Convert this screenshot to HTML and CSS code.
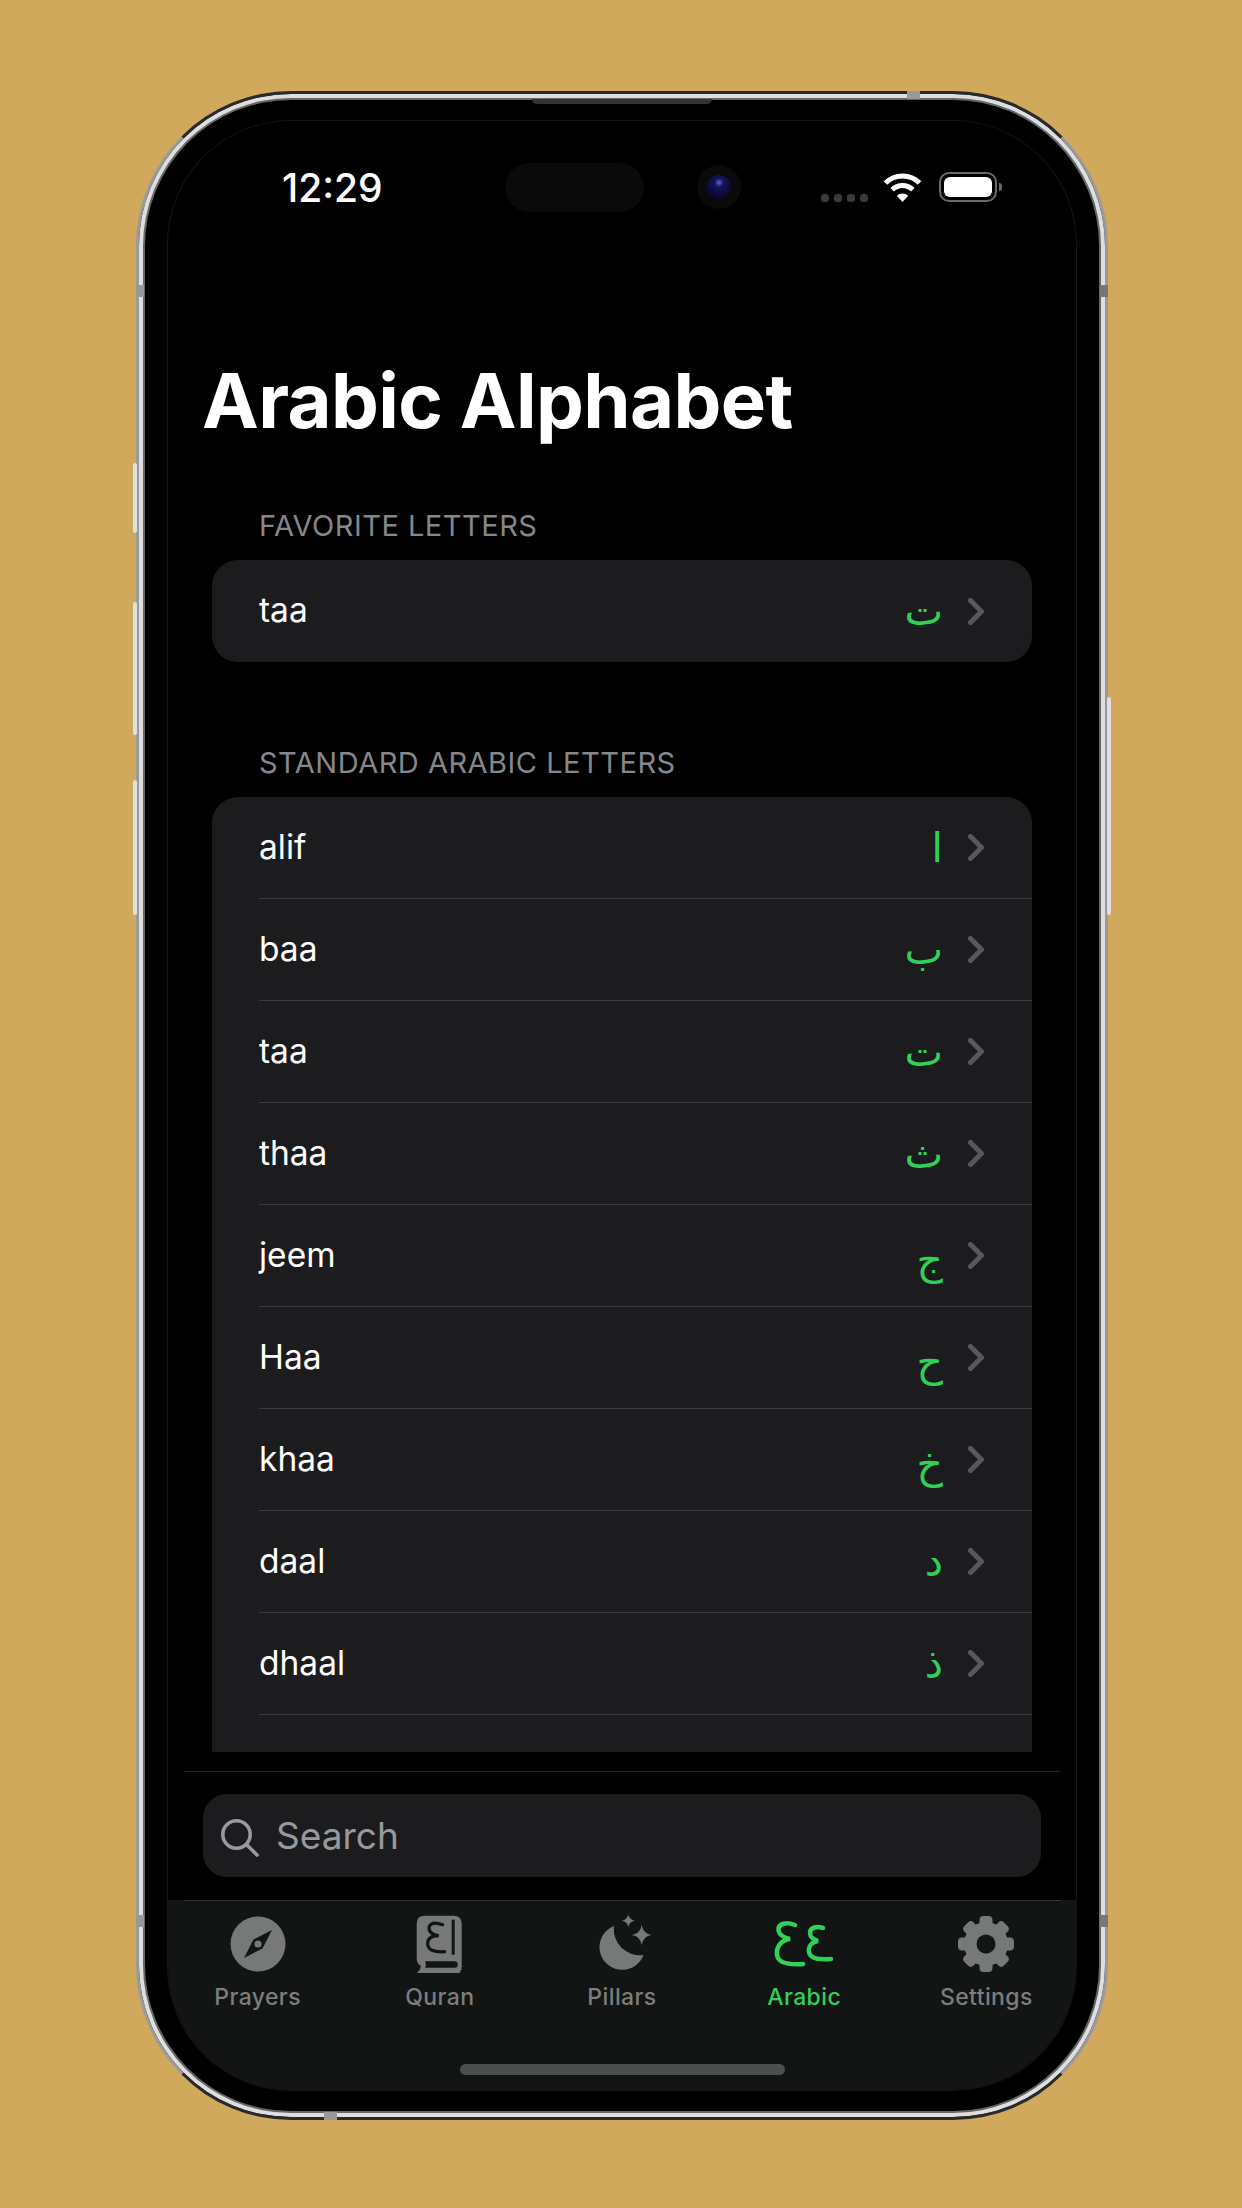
FILE: index.html
```html
<!DOCTYPE html>
<html lang="en">
<head>
    <meta charset="UTF-8">
    <meta name="viewport" content="width=device-width, initial-scale=1.0">
    <title>Arabic Alphabet</title>
    <link rel="stylesheet" href="styles.css">
</head>
<body>

<div class="phone">
    <!-- Frame details -->
    <span class="side-btn btn-a"></span>
    <span class="side-btn btn-b"></span>
    <span class="side-btn btn-c"></span>
    <span class="side-btn btn-d"></span>
    <span class="tick tick-top"></span>
    <span class="tick tick-bottom"></span>
    <span class="tick tick-lt"></span>
    <span class="tick tick-rt"></span>
    <span class="tick tick-lb"></span>
    <span class="tick tick-rb"></span>
    <span class="speaker"></span>

    <div class="screen">
        <div class="status-bar">
            <span class="time">12:29</span>
            <span class="island"></span>
            <span class="camera"><span class="lens"></span></span>
            <span class="signal"><i></i><i></i><i></i><i></i></span>
            <svg class="wifi" width="39" height="29" viewBox="0 0 39 29">
                <path d="M2.5 10A24 24 0 0 1 36.5 10" fill="none" stroke="#fff" stroke-width="5"/>
                <path d="M9.25 16.75A14.5 14.5 0 0 1 29.75 16.75" fill="none" stroke="#fff" stroke-width="5"/>
                <path d="M19.5 29L13.8 22.8A8 8 0 0 1 25.2 22.8Z" fill="#fff"/>
            </svg>
            <span class="battery"><span class="battery-fill"></span></span>
            <span class="battery-nub"></span>
        </div>

        <div class="content">
            <h1 class="page-title">Arabic Alphabet</h1>

            <h2 class="section-title first">FAVORITE LETTERS</h2>
            <div class="card">
                <div class="row">
                    <div class="row-inner">
                        <span class="name">taa</span>
                        <span class="letter">ت</span>
                        <svg class="chevron" width="16" height="27" viewBox="0 0 16 27"><path d="M2.5 2.5L13.5 13.5L2.5 24.5"/></svg>
                    </div>
                </div>
            </div>

            <h2 class="section-title">STANDARD ARABIC LETTERS</h2>
            <div class="card">
                <div class="row"><div class="row-inner">
                    <span class="name">alif</span><span class="letter">ا</span>
                    <svg class="chevron" width="16" height="27" viewBox="0 0 16 27"><path d="M2.5 2.5L13.5 13.5L2.5 24.5"/></svg>
                </div></div>
                <div class="row"><div class="row-inner">
                    <span class="name">baa</span><span class="letter">ب</span>
                    <svg class="chevron" width="16" height="27" viewBox="0 0 16 27"><path d="M2.5 2.5L13.5 13.5L2.5 24.5"/></svg>
                </div></div>
                <div class="row"><div class="row-inner">
                    <span class="name">taa</span><span class="letter">ت</span>
                    <svg class="chevron" width="16" height="27" viewBox="0 0 16 27"><path d="M2.5 2.5L13.5 13.5L2.5 24.5"/></svg>
                </div></div>
                <div class="row"><div class="row-inner">
                    <span class="name">thaa</span><span class="letter">ث</span>
                    <svg class="chevron" width="16" height="27" viewBox="0 0 16 27"><path d="M2.5 2.5L13.5 13.5L2.5 24.5"/></svg>
                </div></div>
                <div class="row"><div class="row-inner">
                    <span class="name">jeem</span><span class="letter low">ج</span>
                    <svg class="chevron" width="16" height="27" viewBox="0 0 16 27"><path d="M2.5 2.5L13.5 13.5L2.5 24.5"/></svg>
                </div></div>
                <div class="row"><div class="row-inner">
                    <span class="name">Haa</span><span class="letter low">ح</span>
                    <svg class="chevron" width="16" height="27" viewBox="0 0 16 27"><path d="M2.5 2.5L13.5 13.5L2.5 24.5"/></svg>
                </div></div>
                <div class="row"><div class="row-inner">
                    <span class="name">khaa</span><span class="letter low">خ</span>
                    <svg class="chevron" width="16" height="27" viewBox="0 0 16 27"><path d="M2.5 2.5L13.5 13.5L2.5 24.5"/></svg>
                </div></div>
                <div class="row"><div class="row-inner">
                    <span class="name">daal</span><span class="letter">د</span>
                    <svg class="chevron" width="16" height="27" viewBox="0 0 16 27"><path d="M2.5 2.5L13.5 13.5L2.5 24.5"/></svg>
                </div></div>
                <div class="row"><div class="row-inner">
                    <span class="name">dhaal</span><span class="letter">ذ</span>
                    <svg class="chevron" width="16" height="27" viewBox="0 0 16 27"><path d="M2.5 2.5L13.5 13.5L2.5 24.5"/></svg>
                </div></div>
                <div class="row"><div class="row-inner">
                    <span class="name"></span>
                    <svg class="chevron" width="16" height="27" viewBox="0 0 16 27"><path d="M2.5 2.5L13.5 13.5L2.5 24.5"/></svg>
                </div></div>
            </div>
        </div>

        <div class="search-area">
            <div class="search-box">
                <svg class="search-icon" width="38" height="38" viewBox="0 0 38 38">
                    <circle cx="15.5" cy="15.5" r="13.7"/>
                    <path d="M25.5 25.5L36 36"/>
                </svg>
                <span class="search-text">Search</span>
            </div>
        </div>

        <div class="tab-bar">
            <div class="tab-line"></div>
            <div class="tabs">
                <div class="tab">
                    <svg width="80" height="58" viewBox="-40 -29 80 58">
                        <circle r="27.5" fill="#767978"/>
                        <path d="M14 -14L4.5 4.5L-14 14L-4.5 -4.5Z" fill="#131414"/>
                        <circle r="3.6" fill="#767978"/>
                    </svg>
                    <span>Prayers</span>
                </div>
                <div class="tab">
                    <svg width="80" height="58" viewBox="0 10 80 58">
                        <g transform="translate(16.7 10.7)">
                            <path d="M8 0H37Q45 0 45 8V51Q45 59 37 59H2Q0 59 1 56Q4 54 4 50Q0 48 0 42V8Q0 0 8 0Z" fill="#767978"/>
                            <path d="M8.5 45.5H38Q41 45.5 41 48.7Q41 52 38 52H8.5Q9.8 49 8.5 45.5Z" fill="#131414"/>
                            <rect x="35" y="4" width="3" height="35" fill="#131414"/>
                            <path d="M26 9Q15 5 12.5 11Q11 18 22 20Q11 20 11 28Q11 37 28 36" fill="none" stroke="#131414" stroke-width="3.2" stroke-linecap="round"/>
                        </g>
                    </svg>
                    <span>Quran</span>
                </div>
                <div class="tab">
                    <svg width="80" height="58" viewBox="-3 10 80 58" fill="#767978">
                        <path d="M29 21A22.7 22.7 0 1 0 58.5 50A26 26 0 0 1 29 21Z"/>
                        <path d="M56.7 20Q58 28.7 66.7 30Q58 31.3 56.7 40Q55.4 31.3 46.7 30Q55.4 28.7 56.7 20Z"/>
                        <path d="M43.3 9.2Q44.2 14.8 49.8 15.7Q44.2 16.6 43.3 22.2Q42.4 16.6 36.8 15.7Q42.4 14.8 43.3 9.2Z"/>
                    </svg>
                    <span>Pillars</span>
                </div>
                <div class="tab active">
                    <svg width="80" height="58" viewBox="3 10 80 58" fill="none" stroke="#30d158" stroke-width="4.5" stroke-linecap="round">
                        <path d="M34 20C26 17 17 18 17.5 25C18 30 24 33 29 34C20 35 15 42 16 50C17 58 27 60 42 59"/>
                        <path d="M62 23C56 21 49 22 49 28C49 32 53 35 57 36C51 37 47 41 48 47C49 54 58 55 70 54"/>
                    </svg>
                    <span>Arabic</span>
                </div>
                <div class="tab">
                    <svg width="80" height="58" viewBox="-40 -29 80 58" fill="#767978">
                        <circle r="22"/>
                        <rect x="-6.5" y="-28" width="13" height="14" rx="4"/>
                        <rect x="-6.5" y="-28" width="13" height="14" rx="4" transform="rotate(45)"/>
                        <rect x="-6.5" y="-28" width="13" height="14" rx="4" transform="rotate(90)"/>
                        <rect x="-6.5" y="-28" width="13" height="14" rx="4" transform="rotate(135)"/>
                        <rect x="-6.5" y="-28" width="13" height="14" rx="4" transform="rotate(180)"/>
                        <rect x="-6.5" y="-28" width="13" height="14" rx="4" transform="rotate(225)"/>
                        <rect x="-6.5" y="-28" width="13" height="14" rx="4" transform="rotate(270)"/>
                        <rect x="-6.5" y="-28" width="13" height="14" rx="4" transform="rotate(315)"/>
                        <circle r="9.5" fill="#131414"/>
                    </svg>
                    <span>Settings</span>
                </div>
            </div>
            <div class="home-indicator"></div>
        </div>
    </div>
</div>

</body>
</html>
```

FILE: styles.css
```css
* {
    box-sizing: border-box;
}
body {
    margin: 0;
    padding: 91px 0 0 136px;
    height: 2208px;
    overflow: hidden;
    background: #d0a95c;
    font-family: Inter, "Noto Sans", sans-serif;
    color: white;
}

/* Phone frame */
.phone {
    position: relative;
    width: 972px;
    height: 2029px;
    padding: 27px 29px;
    background: #000;
    border: 3px solid #9a9a9a;
    border-top-color: #2a2a2a;
    border-bottom-color: #2a2a2a;
    border-radius: 155px;
    box-shadow: inset 0 0 0 4px #dedede, inset 0 0 0 6px #666;
}
.side-btn {
    position: absolute;
    width: 4px;
    background: #e0e0e0;
    border-radius: 2px;
}
.btn-a { left: -6px; top: 369px; height: 70px; }
.btn-b { left: -6px; top: 508px; height: 133px; }
.btn-c { left: -6px; top: 686px; height: 135px; }
.btn-d { right: -6px; top: 603px; height: 218px; }
.tick {
    position: absolute;
    background: #999;
}
.tick-top { top: -3px; left: 768px; width: 13px; height: 8px; }
.tick-bottom { bottom: -3px; left: 185px; width: 13px; height: 8px; }
.tick-lt { left: -3px; top: 191px; width: 8px; height: 12px; }
.tick-rt { right: -3px; top: 191px; width: 8px; height: 12px; background: #777; }
.tick-lb { left: -3px; top: 1821px; width: 8px; height: 12px; }
.tick-rb { right: -3px; top: 1821px; width: 8px; height: 12px; background: #777; }
.speaker {
    position: absolute;
    top: 5px;
    left: 393px;
    width: 180px;
    height: 5px;
    background: #333;
    border-radius: 0 0 6px 6px;
}

.screen {
    width: 908px;
    height: 1969px;
    display: flex;
    flex-direction: column;
    background: #000;
    border-radius: 123px;
    box-shadow: 0 0 0 1px #151515;
    overflow: hidden;
}

/* Status bar */
.status-bar {
    height: 132px;
    flex: none;
    display: flex;
    align-items: center;
    padding-left: 114px;
}
.time {
    width: 101px;
    font-size: 39px;
    font-weight: 500;
    white-space: nowrap;
}
.island {
    width: 139px;
    height: 49px;
    margin-left: 122px;
    background: #0a0a0a;
    border-radius: 25px;
}
.camera {
    width: 44px;
    height: 44px;
    margin-left: 53px;
    display: flex;
    align-items: center;
    justify-content: center;
    background: #0a0a0a;
    border-radius: 50%;
}
.lens {
    width: 24px;
    height: 24px;
    border-radius: 50%;
    background: radial-gradient(circle at 50% 32%, #6a5fd0 0, #14145a 22%, #0b0b3a 60%, #04041a 100%);
}
.signal {
    display: flex;
    gap: 5px;
    margin-left: 80px;
    margin-top: 21px;
}
.signal i {
    width: 8px;
    height: 8px;
    background: #3a3a3a;
    border-radius: 3px;
}
.wifi {
    margin-left: 15px;
}
.battery {
    width: 58px;
    height: 30px;
    margin-left: 17px;
    padding: 3px;
    border: 2px solid #6a6a6a;
    border-radius: 10px;
}
.battery-fill {
    display: block;
    height: 100%;
    background: #fff;
    border-radius: 6px;
}
.battery-nub {
    width: 3px;
    height: 8px;
    margin-left: 2px;
    background: #6a6a6a;
    border-radius: 0 3px 3px 0;
}

/* Scrolling list */
.content {
    flex: 1;
    min-height: 0;
    overflow: hidden;
}
.page-title {
    margin: 101px 0 0 34px;
    font-size: 76px;
    line-height: 92px;
    font-weight: 700;
    letter-spacing: -0.6px;
}
.section-title {
    margin: 84px 0 17px 91px;
    font-size: 29px;
    line-height: 34px;
    font-weight: 400;
    letter-spacing: 0.5px;
    color: #86868b;
}
.section-title.first {
    margin-top: 63px;
}
.card {
    margin: 0 44px;
    background: #1c1c1e;
    border-radius: 26px;
    overflow: hidden;
}
.row {
    padding-left: 47px;
}
.row-inner {
    height: 102px;
    display: flex;
    align-items: center;
    padding-right: 48px;
    border-bottom: 1px solid #38383a;
}
.card .row:last-child .row-inner {
    border-bottom: none;
}
.name {
    flex: 1;
    padding-bottom: 2px;
    font-size: 33.5px;
}
.letter {
    margin-right: 25px;
    font-family: "DejaVu Sans", sans-serif;
    font-size: 41px;
    line-height: 102px;
    color: #30d158;
}
.letter.low {
    padding-top: 8px;
}
.chevron {
    flex: none;
}
.chevron path {
    fill: none;
    stroke: #58585a;
    stroke-width: 5;
    stroke-linecap: round;
    stroke-linejoin: round;
}

/* Search */
.search-area {
    flex: none;
    margin: 19px 16px 0;
    padding: 22px 19px 23px;
    border-top: 1px solid #1f1f1f;
}
.search-box {
    height: 83px;
    display: flex;
    align-items: center;
    padding-left: 18px;
    background: #1c1c1e;
    border-radius: 24px;
}
.search-icon {
    flex: none;
    margin-top: 4px;
}
.search-icon circle,
.search-icon path {
    fill: none;
    stroke: #98989f;
    stroke-width: 3.6;
    stroke-linecap: round;
}
.search-text {
    margin-left: 17px;
    font-size: 37px;
    color: #98989f;
}

/* Tab bar */
.tab-bar {
    flex: none;
    height: 190px;
    background: #131414;
    display: flex;
    flex-direction: column;
}
.tab-line {
    height: 1px;
    margin: 0 16px;
    background: #333;
}
.tabs {
    display: grid;
    grid-template-columns: repeat(5, 182.2px);
    justify-content: center;
    padding-top: 14px;
}
.tab {
    display: flex;
    flex-direction: column;
    align-items: center;
    color: #7c7e7d;
    font-size: 23px;
    font-weight: 500;
    letter-spacing: 0.4px;
}
.tab span {
    margin-top: 9px;
    line-height: 30px;
}
.tab.active {
    color: #30d158;
}
.home-indicator {
    width: 325px;
    height: 11px;
    margin: 52px auto 0;
    background: #4d4e4e;
    border-radius: 6px;
}
```
